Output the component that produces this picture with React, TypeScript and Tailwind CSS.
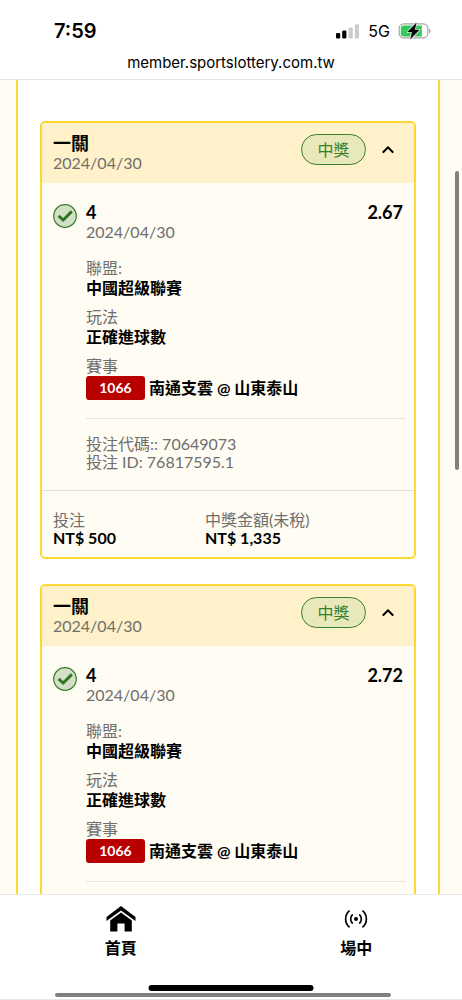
import { useState } from "react";

type Bet = {
  type: string;
  date: string;
  status: string;
  pick: string;
  odds: string;
  league: string;
  play: string;
  code: string;
  home: string;
  away: string;
  betCode: string;
  betId: string;
  stake: string;
  payout: string;
};

const bets: Bet[] = [
  {
    type: "一關",
    date: "2024/04/30",
    status: "中獎",
    pick: "4",
    odds: "2.67",
    league: "中國超級聯賽",
    play: "正確進球數",
    code: "1066",
    home: "南通支雲",
    away: "山東泰山",
    betCode: "70649073",
    betId: "76817595.1",
    stake: "NT$ 500",
    payout: "NT$ 1,335",
  },
  {
    type: "一關",
    date: "2024/04/30",
    status: "中獎",
    pick: "4",
    odds: "2.72",
    league: "中國超級聯賽",
    play: "正確進球數",
    code: "1066",
    home: "南通支雲",
    away: "山東泰山",
    betCode: "",
    betId: "",
    stake: "",
    payout: "",
  },
];

function SignalIcon() {
  return (
    <svg width="24" height="15" viewBox="0 0 24 15" aria-hidden="true">
      <rect x="0" y="9" width="4.2" height="5.6" rx="1.3" fill="#000" />
      <rect x="6.2" y="6.4" width="4.2" height="8.2" rx="1.3" fill="#000" />
      <rect x="12.6" y="3.4" width="4.2" height="11.2" rx="1.3" fill="#ccc" />
      <rect x="18.8" y="0.2" width="4.2" height="14.4" rx="1.3" fill="#ccc" />
    </svg>
  );
}

function BatteryIcon() {
  return (
    <svg width="34" height="18" viewBox="0 0 34 18" aria-hidden="true">
      <rect x="1.2" y="1.9" width="28.6" height="14" rx="4.6" fill="#fff" stroke="#a6a6a6" strokeWidth="1.2" />
      <path d="M5.8 3.4H23.8V14.4H5.8A3 3 0 0 1 2.8 11.4V6.4A3 3 0 0 1 5.8 3.4Z" fill="#34c759" />
      <path d="M31.2 6.6C33.2 7.4 33.2 10.6 31.2 11.4Z" fill="#a6a6a6" />
      <path d="M18.2 1.2L9.6 9.9H14.3L12.6 16.8L21.2 8H16.5Z" fill="#000" stroke="#fff" strokeWidth="2" strokeLinejoin="round" />
      <path d="M18.2 1.2L9.6 9.9H14.3L12.6 16.8L21.2 8H16.5Z" fill="#000" stroke="#000" strokeWidth="0.6" strokeLinejoin="round" />
    </svg>
  );
}

function CheckIcon() {
  return (
    <svg className="mt-0.5 shrink-0" width="24" height="24" viewBox="0 0 24 24" aria-hidden="true">
      <circle cx="12" cy="12" r="11.3" fill="#d4dfc8" stroke="#38802c" strokeWidth="1.2" />
      <path d="M5.6 11.8L10.2 16L18.8 7.4" fill="none" stroke="#2d761f" strokeWidth="3" />
    </svg>
  );
}

function ChevronIcon({ open }: { open: boolean }) {
  return (
    <svg className={open ? "" : "rotate-180"} width="12" height="8" viewBox="0 0 12 8" aria-hidden="true">
      <path d="M1.4 6L6 1.4L10.6 6" fill="none" stroke="#000" strokeWidth="2" strokeLinecap="round" />
    </svg>
  );
}

function HomeIcon() {
  return (
    <svg width="30" height="26" viewBox="0 0 30 26" aria-hidden="true">
      <path d="M15 0L29.5 11V15L15 4.4L0.5 15V11Z" />
      <path d="M15 6.6L25.8 14.4V25.6H18.6V17.6H11.4V25.6H4.2V14.4Z" />
    </svg>
  );
}

function LiveIcon() {
  return (
    <svg width="24" height="26" viewBox="0 0 24 26" fill="none" stroke="#000" strokeWidth="1.7" aria-hidden="true">
      <circle cx="12" cy="13" r="2" fill="#000" stroke="none" />
      <path d="M8.7 8.4C6 10.8 6 15.2 8.7 17.6M15.3 8.4C18 10.8 18 15.2 15.3 17.6" />
      <path d="M5.6 4.6C0.3 8.8 0.3 17.2 5.6 21.4M18.4 4.6C23.7 8.8 23.7 17.2 18.4 21.4" />
    </svg>
  );
}

function Field({ label, value }: { label: string; value: string }) {
  return (
    <div>
      <dt className="text-[#6f6f6b]">{label}</dt>
      <dd className="font-bold">{value}</dd>
    </div>
  );
}

function BetCard({ bet }: { bet: Bet }) {
  const [open, setOpen] = useState(true);
  return (
    <article className="overflow-hidden rounded-[5px] border-2 border-[#fdd835] bg-[#fffcf4]">
      <header className="flex items-start justify-between bg-[#fff1c9] py-[11px] pr-5 pl-[11px]">
        <div className="leading-[19px]">
          <h2 className="text-lg leading-[19px] font-bold">{bet.type}</h2>
          <p className="text-[#6f6f6b]">{bet.date}</p>
        </div>
        <div className="flex items-center gap-4">
          <span className="flex h-[31px] w-[65px] items-center justify-center rounded-full border border-[#38802c] bg-[#e8e8ba] text-[#38802c]">
            {bet.status}
          </span>
          <button type="button" aria-label="展開" aria-expanded={open} onClick={() => setOpen(!open)}>
            <ChevronIcon open={open} />
          </button>
        </div>
      </header>
      {open && (
        <>
          <div className="flex gap-[9px] pt-[19px] pr-2 pb-[19px] pl-[11px] leading-5">
            <CheckIcon />
            <div className="min-w-0 flex-1">
              <div className="flex justify-between pr-[3px] text-lg leading-5 font-bold">
                <span>{bet.pick}</span>
                <span>{bet.odds}</span>
              </div>
              <p className="text-[#6f6f6b]">{bet.date}</p>
              <dl className="mt-4 flex flex-col gap-[9px]">
                <Field label="聯盟:" value={bet.league} />
                <Field label="玩法" value={bet.play} />
                <div>
                  <dt className="text-[#6f6f6b]">賽事</dt>
                  <dd className="flex items-center gap-1 font-bold">
                    <span className="h-6 w-[59px] rounded-[3px] bg-[#b80000] text-center text-sm leading-6 text-white">
                      {bet.code}
                    </span>
                    <span>
                      {bet.home} @ {bet.away}
                    </span>
                  </dd>
                </div>
              </dl>
              <div className="mt-[18px] border-t border-[#e6e4de] pt-4 text-[#6f6f6b]">
                {bet.betCode && (
                  <>
                    <p className="leading-[18px]">投注代碼:: {bet.betCode}</p>
                    <p className="leading-[18px]">投注 ID: {bet.betId}</p>
                  </>
                )}
              </div>
            </div>
          </div>
          {bet.stake && (
            <dl className="grid grid-cols-[152px_1fr] border-t border-[#e2e0da] pt-5 pb-2.5 pl-[11px] leading-[18px]">
              <Field label="投注" value={bet.stake} />
              <Field label="中獎金額(未稅)" value={bet.payout} />
            </dl>
          )}
        </>
      )}
    </article>
  );
}

export default function App() {
  return (
    <div className="flex h-screen flex-col overflow-hidden bg-white font-[Lato,'Noto_Sans_CJK_TC',sans-serif] text-base text-black">
      <header className="shrink-0 border-b border-[#e2e2e2] font-[Inter,sans-serif]">
        <div className="flex items-center justify-between pt-4 pr-[30px] pl-[54px]">
          <span className="text-xl leading-[30px] font-semibold">7:59</span>
          <div className="flex items-center gap-2">
            <SignalIcon />
            <span className="text-base leading-[30px]">5G</span>
            <BatteryIcon />
          </div>
        </div>
        <p className="pt-[5px] pb-1 text-center text-[15px] leading-6">member.sportslottery.com.tw</p>
      </header>

      <main className="relative min-h-0 flex-1 overflow-hidden bg-[#fffcf4] pr-[22px] pl-4">
        <div className="flex flex-col gap-[25px] border-x-2 border-[#fdd835] bg-white px-[22px] pt-[41px]">
          {bets.map((bet) => (
            <BetCard key={bet.odds} bet={bet} />
          ))}
        </div>
        <div className="absolute top-[91px] right-[3px] h-[299px] w-1 rounded-full bg-[#80807c]" />
      </main>

      <nav className="relative h-[106px] shrink-0 border-y border-[#e6e6e6] font-bold">
        <div className="-mr-3 ml-[3px] grid grid-cols-2 pt-[11px]">
          <a href="#home" className="flex flex-col items-center gap-1">
            <HomeIcon />
            <span>首頁</span>
          </a>
          <a href="#live" className="flex flex-col items-center gap-1">
            <LiveIcon />
            <span>場中</span>
          </a>
        </div>
        <div className="absolute bottom-2 left-1/2 h-[6px] w-[165px] -translate-x-1/2 rounded-full bg-black" />
        <div className="absolute right-[71px] bottom-[2px] left-[55px] h-1 rounded-full bg-[#808080]" />
      </nav>
    </div>
  );
}
